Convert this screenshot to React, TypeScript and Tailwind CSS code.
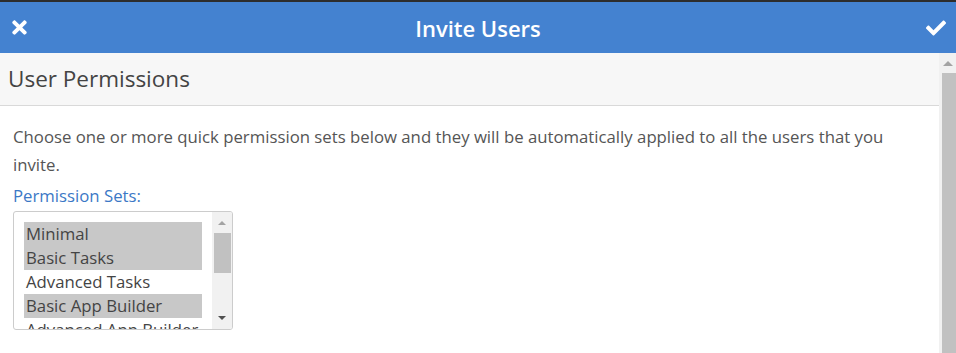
import { FaTimes, FaCheck } from "react-icons/fa";

const sets = [
  { name: "Minimal", on: true },
  { name: "Basic Tasks", on: true },
  { name: "Advanced Tasks", on: false },
  { name: "Basic App Builder", on: true },
  { name: "Advanced App Builder", on: false },
];

const App = () => {
  return (
    <div
      className="w-[956px] h-[353px] overflow-hidden bg-white flex flex-col"
      style={{ fontFamily: '"Open Sans", sans-serif' }}
    >
      <div className="h-[2px] bg-[#2d2d2d]" />

      {/* HEADER */}
      <div className="h-[51px] bg-[#4482d0] flex items-center justify-between pl-[9px] pr-[10px] text-white">
        <FaTimes size={21} />
        <h1 className="text-[22px] font-semibold leading-none">Invite Users</h1>
        <FaCheck size={20} />
      </div>

      <div className="flex flex-1 min-h-0">
        <div className="flex-1 flex flex-col">
          {/* SECTION TITLE */}
          <div className="h-[53px] bg-[#f7f7f7] border-b border-[#d9d9d9] flex items-center px-[8px]">
            <h2 className="text-[22.5px] text-[#444]">User Permissions</h2>
          </div>

          <div className="px-[13px] pt-[17px]">
            <p className="text-[16.75px] leading-[28px] text-[#555]">
              Choose one or more quick permission sets below and they will be automatically applied to all the users that you invite.
            </p>
            <label className="block text-[16.75px] leading-[22px] text-[#3b78c6] mt-[6px]">
              Permission Sets:
            </label>

            {/* LISTBOX */}
            <div className="mt-[4px] w-[220px] h-[119px] border border-[#ccc] rounded-[3px] flex overflow-hidden">
              <div className="flex-1 pt-[10px] px-[10px] overflow-hidden">
                {sets.map((s) => (
                  <div
                    key={s.name}
                    className={`h-[24px] leading-[24px] text-[16.75px] text-[#444] px-[2px] whitespace-nowrap ${s.on ? "bg-[#c8c8c8]" : ""}`}
                  >
                    {s.name}
                  </div>
                ))}
              </div>
              <div className="w-[20px] bg-[#f1f1f1] flex flex-col items-center">
                <div className="h-[21px] flex items-center justify-center">
                  <div className="w-0 h-0 border-x-[4px] border-x-transparent border-b-[4px] border-b-[#a3a3a3]" />
                </div>
                <div className="w-[17px] h-[40px] bg-[#c1c1c1]" />
                <div className="flex-1" />
                <div className="h-[22px] flex items-center justify-center">
                  <div className="w-0 h-0 border-x-[4px] border-x-transparent border-t-[4px] border-t-[#505050]" />
                </div>
              </div>
            </div>
          </div>
        </div>

        {/* PAGE SCROLLBAR */}
        <div className="w-[17px] bg-[#f1f1f1] flex flex-col items-end">
          <div className="w-[17px] h-[20px] flex items-center justify-center">
            <div className="w-0 h-0 border-x-[5px] border-x-transparent border-b-[5px] border-b-[#a3a3a3]" />
          </div>
          <div className="w-[14px] flex-1 bg-[#c1c1c1]" />
        </div>
      </div>
    </div>
  );
};

export default App;
